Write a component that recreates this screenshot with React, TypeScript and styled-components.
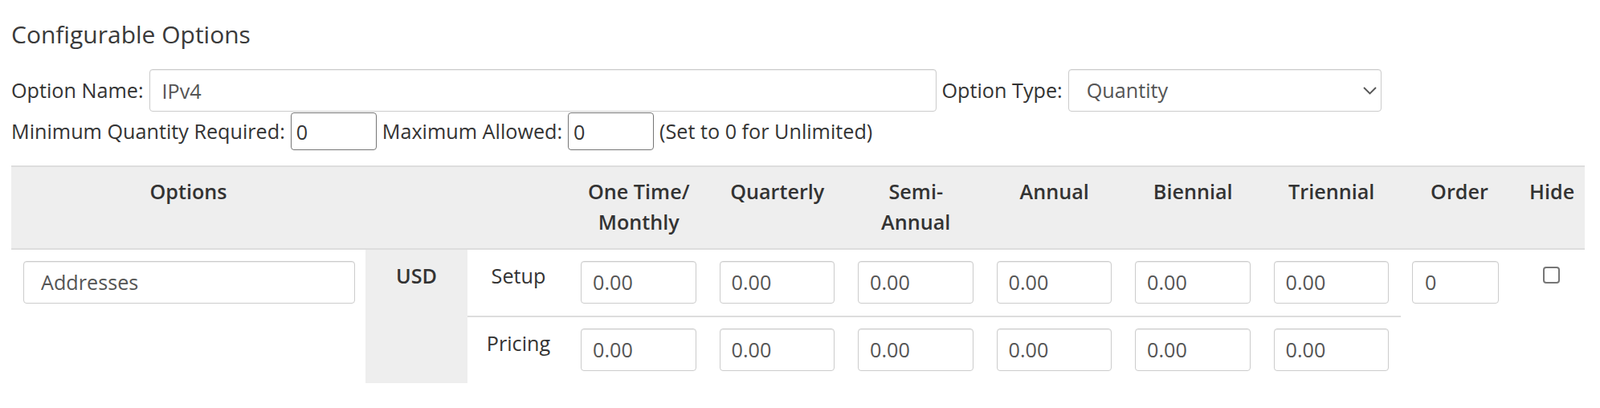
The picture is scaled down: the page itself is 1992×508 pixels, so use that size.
import styled, { createGlobalStyle } from "styled-components";

const GlobalStyle = createGlobalStyle`
  body {
    margin: 0;
    background: #fff;
    font-family: "Open Sans", "Liberation Sans", sans-serif;
    font-size: 25.2px;
    line-height: 1.5;
    color: #333;
  }
`;

const Page = styled.div`
  width: 1992px;
  box-sizing: border-box;
  padding: 0 19px 0 14px;
`;

const Heading = styled.h2`
  margin: 26px 0 27px;
  font-size: 30px;
  font-weight: 400;
  line-height: 1.1;
  color: #3a3a3a;
`;

const FieldRow = styled.div<{ $top?: number }>`
  display: flex;
  align-items: center;
  gap: 7px;
  margin-top: ${p => p.$top ?? 0}px;
`;

const Label = styled.label`
  white-space: nowrap;
`;

const TextInput = styled.input<{ $w?: number; $pl?: number }>`
  box-sizing: border-box;
  display: block;
  width: ${p => (p.$w ? `${p.$w}px` : "100%")};
  height: 53px;
  padding: 0 ${p => p.$pl ?? 14}px;
  border: 1px solid #ccc;
  border-radius: 4px;
  box-shadow: inset 0 1px 1px rgba(0, 0, 0, 0.075);
  background: #fff;
  font: inherit;
  color: #555;
  outline: none;
`;

const SmallInput = styled.input`
  box-sizing: border-box;
  width: 107px;
  height: 47px;
  padding: 0 6px;
  border: 1px solid #767676;
  border-radius: 4px;
  background: #fff;
  font: inherit;
  color: #333;
  outline: none;
`;

const SelectWrap = styled.div`
  position: relative;
  width: 390px;
  height: 53px;
`;

const Select = styled.select`
  appearance: none;
  box-sizing: border-box;
  width: 100%;
  height: 100%;
  padding: 0 40px 0 22px;
  border: 1px solid #ccc;
  border-radius: 4px;
  box-shadow: inset 0 1px 1px rgba(0, 0, 0, 0.075);
  background: #fff;
  font: inherit;
  color: #555;
  outline: none;
`;

const Chevron = styled.svg`
  position: absolute;
  right: 6px;
  top: 50%;
  transform: translateY(-50%);
  pointer-events: none;
`;

const Table = styled.table`
  margin-top: 19px;
  width: 1959px;
  table-layout: fixed;
  border-collapse: separate;
  border-spacing: 0;
`;

const Th = styled.th<{ $pl?: number }>`
  padding: 12px 15px 13px ${p => p.$pl ?? 15}px;
  border-top: 2px solid #ddd;
  border-bottom: 2px solid #ddd;
  background: #eee;
  font-weight: 600;
  text-align: center;
  vertical-align: top;
`;

const Td = styled.td<{ $divider?: boolean; $pl?: number; $pr?: number }>`
  padding: 14px ${p => p.$pr ?? 15}px 15px ${p => p.$pl ?? 14}px;
  vertical-align: top;
  border-bottom: ${p => (p.$divider ? "2px solid #ddd" : "none")};
`;

const CurrencyCell = styled.td`
  padding: 14px 10px 0;
  background: #eee;
  font-weight: 600;
  text-align: center;
  vertical-align: top;
`;

const TermCell = styled.td<{ $divider?: boolean }>`
  padding: 14px 10px 15px;
  text-align: center;
  vertical-align: top;
  border-bottom: ${p => (p.$divider ? "2px solid #ddd" : "none")};
`;

const HideBox = styled.input`
  appearance: none;
  display: block;
  box-sizing: border-box;
  width: 21px;
  height: 21px;
  margin: 7px auto 0;
  border: 2px solid #767676;
  border-radius: 4px;
  background: #fff;
`;

const periods = [
  ["One Time/", "Monthly"],
  ["Quarterly"],
  ["Semi-", "Annual"],
  ["Annual"],
  ["Biennial"],
  ["Triennial"],
];

const colWidths = [441, 127, 127, 172.5, 172.5, 172.5, 172.5, 172.5, 172.5, 137, 92];

function PriceCells({ divider }: { divider?: boolean }) {
  return (
    <>
      {periods.map((_, i) => (
        <Td key={i} $divider={divider}>
          <TextInput defaultValue="0.00" />
        </Td>
      ))}
    </>
  );
}

export default function App() {
  return (
    <Page>
      <GlobalStyle />
      <Heading>Configurable Options</Heading>

      <FieldRow>
        <Label>Option Name:</Label>
        <TextInput $w={980} $pl={15} defaultValue="IPv4" />
        <Label>Option Type:</Label>
        <SelectWrap>
          <Select defaultValue="Quantity">
            <option>Dropdown</option>
            <option>Radio</option>
            <option>Yes/No</option>
            <option>Quantity</option>
          </Select>
          <Chevron width="17" height="10" viewBox="0 0 17 10">
            <polyline points="1,1 8.5,8.5 16,1" fill="none" stroke="#555" strokeWidth="1.8" />
          </Chevron>
        </SelectWrap>
      </FieldRow>

      <FieldRow $top={1}>
        <Label>Minimum Quantity Required:</Label>
        <SmallInput defaultValue="0" />
        <Label>Maximum Allowed:</Label>
        <SmallInput defaultValue="0" />
        <Label>(Set to 0 for Unlimited)</Label>
      </FieldRow>

      <Table>
        <colgroup>
          {colWidths.map((w, i) => (
            <col key={i} style={{ width: w }} />
          ))}
        </colgroup>
        <thead>
          <tr>
            <Th>Options</Th>
            <Th />
            <Th />
            {periods.map((lines, i) => (
              <Th key={i}>
                {lines.map((l, j) => (
                  <div key={j}>{l}</div>
                ))}
              </Th>
            ))}
            <Th $pl={24}>Order</Th>
            <Th $pl={23}>Hide</Th>
          </tr>
        </thead>
        <tbody>
          <tr>
            <Td rowSpan={2} $pl={15} $pr={13}>
              <TextInput $pl={21} defaultValue="Addresses" />
            </Td>
            <CurrencyCell rowSpan={2}>USD</CurrencyCell>
            <TermCell $divider>Setup</TermCell>
            <PriceCells divider />
            <Td rowSpan={2}>
              <TextInput $pl={15} defaultValue="0" />
            </Td>
            <Td rowSpan={2} $pl={8} $pr={0}>
              <HideBox type="checkbox" />
            </Td>
          </tr>
          <tr>
            <TermCell>Pricing</TermCell>
            <PriceCells />
          </tr>
        </tbody>
      </Table>
    </Page>
  );
}
